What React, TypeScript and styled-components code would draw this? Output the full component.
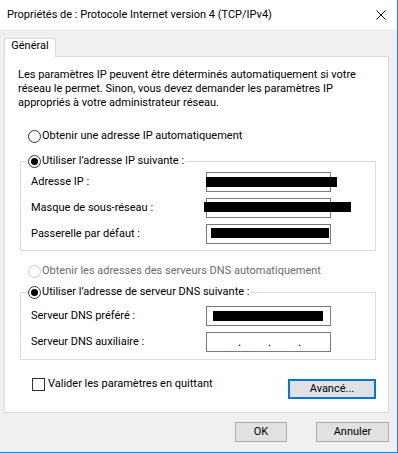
import React from "react";
import styled, { createGlobalStyle } from "styled-components";

const GlobalStyle = createGlobalStyle`
  html, body {
    margin: 0;
    padding: 0;
    background: #fff;
  }
  body {
    font-family: Roboto, "Segoe UI", sans-serif;
    font-size: 11px;
    color: #000;
  }
  * {
    box-sizing: border-box;
  }
`;

const Dialog = () => {
  return (
    <Window>
      <GlobalStyle />
      <TitleBar>
        <Title>Propriétés de : Protocole Internet version 4 (TCP/IPv4)</Title>
        <CloseIcon viewBox="0 0 10 10">
          <path d="M0.5 0.5 L9.5 9.5 M9.5 0.5 L0.5 9.5" stroke="#000" strokeWidth="1" />
        </CloseIcon>
      </TitleBar>
      <Body>
        <Tab>Général</Tab>
        <Panel>
          <Intro>
            Les paramètres IP peuvent être déterminés automatiquement si votre
            <br />
            réseau le permet. Sinon, vous devez demander les paramètres IP
            <br />
            appropriés à votre administrateur réseau.
          </Intro>

          <Choice $top={18}>
            <Radio />
            Obtenir une adresse IP automatiquement
          </Choice>

          <Group $top={9} $bottom={6}>
            <Legend>
              <Choice>
                <Radio $checked />
                Utiliser l’adresse IP suivante :
              </Choice>
            </Legend>
            <Fields $top={3}>
              <FieldLabel>Adresse IP :</FieldLabel>
              <Input>
                <Redact $l={0} $t={5} $w={131} />
              </Input>
              <FieldLabel>Masque de sous-réseau :</FieldLabel>
              <Input>
                <Redact $l={-2} $t={4} $w={147} />
              </Input>
              <FieldLabel>Passerelle par défaut :</FieldLabel>
              <Input>
                <Redact $l={5} $t={4} $w={118} />
              </Input>
            </Fields>
          </Group>

          <Choice $top={12} $disabled>
            <Radio $disabled />
            Obtenir les adresses des serveurs DNS automatiquement
          </Choice>

          <Group $top={5} $bottom={7}>
            <Legend>
              <Choice>
                <Radio $checked />
                Utiliser l’adresse de serveur DNS suivante :
              </Choice>
            </Legend>
            <Fields $top={6}>
              <FieldLabel>Serveur DNS préféré :</FieldLabel>
              <Input>
                <Redact $l={7} $t={5} $w={110} />
              </Input>
              <FieldLabel>Serveur DNS auxiliaire :</FieldLabel>
              <Input>
                <IpDots>
                  <span>.</span>
                  <span>.</span>
                  <span>.</span>
                </IpDots>
              </Input>
            </Fields>
          </Group>

          <OptionsRow>
            <CheckLabel>
              <Checkbox />
              Valider les paramètres en quittant
            </CheckLabel>
            <Button $default $width={88}>
              Avancé...
            </Button>
          </OptionsRow>
        </Panel>
        <Footer>
          <Button $width={52}>OK</Button>
          <Button $width={73}>Annuler</Button>
        </Footer>
      </Body>
    </Window>
  );
};

const Window = styled.div`
  width: 398px;
  height: 453px;
  display: flex;
  flex-direction: column;
  border-right: 1px solid #1883d7;
  border-bottom: 1px solid #1883d7;
  overflow: hidden;
`;

const TitleBar = styled.div`
  height: 29px;
  flex: none;
  background-color: #fff;
  display: flex;
  align-items: center;
  justify-content: space-between;
  padding: 0 11px 0 7px;
`;

const Title = styled.div`
  font-size: 11px;
  line-height: 16px;
  margin-top: 1px;
  white-space: nowrap;
`;

const CloseIcon = styled.svg`
  width: 10px;
  height: 10px;
  flex: none;
`;

const Body = styled.div`
  flex: 1;
  background-color: #f0f0f0;
  padding: 9px 8px 0 4px;
`;

const Tab = styled.div`
  position: relative;
  z-index: 1;
  width: 52px;
  height: 19px;
  margin-bottom: -1px;
  background-color: #fff;
  border: 1px solid #d9d9d9;
  border-bottom: none;
  text-align: center;
  line-height: 14px;
  padding-top: 0;
`;

const Panel = styled.div`
  background-color: #fff;
  border: 1px solid #d9d9d9;
  padding: 11px 12px 13px 13px;
`;

const Intro = styled.p`
  margin: 0;
  line-height: 14px;
  white-space: nowrap;
`;

const Choice = styled.label<{ $top?: number; $disabled?: boolean }>`
  display: flex;
  align-items: center;
  gap: 1px;
  height: 16px;
  line-height: 16px;
  margin-top: ${(p) => p.$top ?? 0}px;
  margin-left: ${(p) => (p.$top !== undefined ? 10 : 0)}px;
  color: ${(p) => (p.$disabled ? "#6d6d6d" : "#000")};
  white-space: nowrap;
`;

const Radio = styled.span<{ $checked?: boolean; $disabled?: boolean }>`
  position: relative;
  width: 13px;
  height: 13px;
  flex: none;
  border-radius: 50%;
  background-color: #fff;
  border: 1px solid ${(p) => (p.$disabled ? "#cccccc" : "#333")};
  &::after {
    content: "";
    display: ${(p) => (p.$checked ? "block" : "none")};
    position: absolute;
    left: 2px;
    top: 2px;
    width: 7px;
    height: 7px;
    border-radius: 50%;
    background-color: #000;
  }
`;

const Group = styled.fieldset<{ $top: number; $bottom: number }>`
  margin: ${(p) => p.$top}px 0 0 2px;
  border: 1px solid #dcdcdc;
  padding: 0 44px ${(p) => p.$bottom}px 7px;
  min-width: 0;
`;

const Legend = styled.legend`
  padding: 0 1px 0 0;
`;

const Fields = styled.div<{ $top: number }>`
  display: grid;
  grid-template-columns: 1fr 125px;
  grid-auto-rows: 20px;
  row-gap: 6px;
  align-items: center;
  margin: ${(p) => p.$top}px 0 0 3px;
`;

const FieldLabel = styled.span`
  line-height: 16px;
  white-space: nowrap;
`;

const Input = styled.div`
  position: relative;
  height: 20px;
  background-color: #fff;
  border: 1px solid #7a7a7a;
`;

const Redact = styled.span<{ $l: number; $t: number; $w: number }>`
  position: absolute;
  left: ${(p) => p.$l - 1}px;
  top: ${(p) => p.$t - 1}px;
  width: ${(p) => p.$w}px;
  height: 10px;
  background-color: #000;
`;

const IpDots = styled.div`
  display: flex;
  gap: 27px;
  padding-left: 31px;
  line-height: 18px;
  font-size: 12px;
  span {
    width: 3px;
  }
`;

const OptionsRow = styled.div`
  display: flex;
  justify-content: space-between;
  align-items: flex-start;
  margin-top: 17px;
`;

const CheckLabel = styled.label`
  display: flex;
  align-items: center;
  gap: 3px;
  margin-left: 14px;
  height: 14px;
  line-height: 14px;
  white-space: nowrap;
`;

const Checkbox = styled.span`
  width: 13px;
  height: 13px;
  flex: none;
  border: 1px solid #333;
  background-color: #fff;
`;

const Button = styled.button<{ $default?: boolean; $width: number }>`
  width: ${(p) => p.$width}px;
  height: 20px;
  margin-top: ${(p) => (p.$default ? 2 : 0)}px;
  padding: 0;
  font-family: inherit;
  font-size: 11px;
  line-height: 16px;
  color: #000;
  background-color: #e1e1e1;
  border: ${(p) => (p.$default ? "2px solid #0078d7" : "1px solid #adadad")};
`;

const Footer = styled.div`
  display: flex;
  justify-content: flex-end;
  gap: 29px;
  margin-top: 9px;
`;

export default function App() {
  return <Dialog />;
}
